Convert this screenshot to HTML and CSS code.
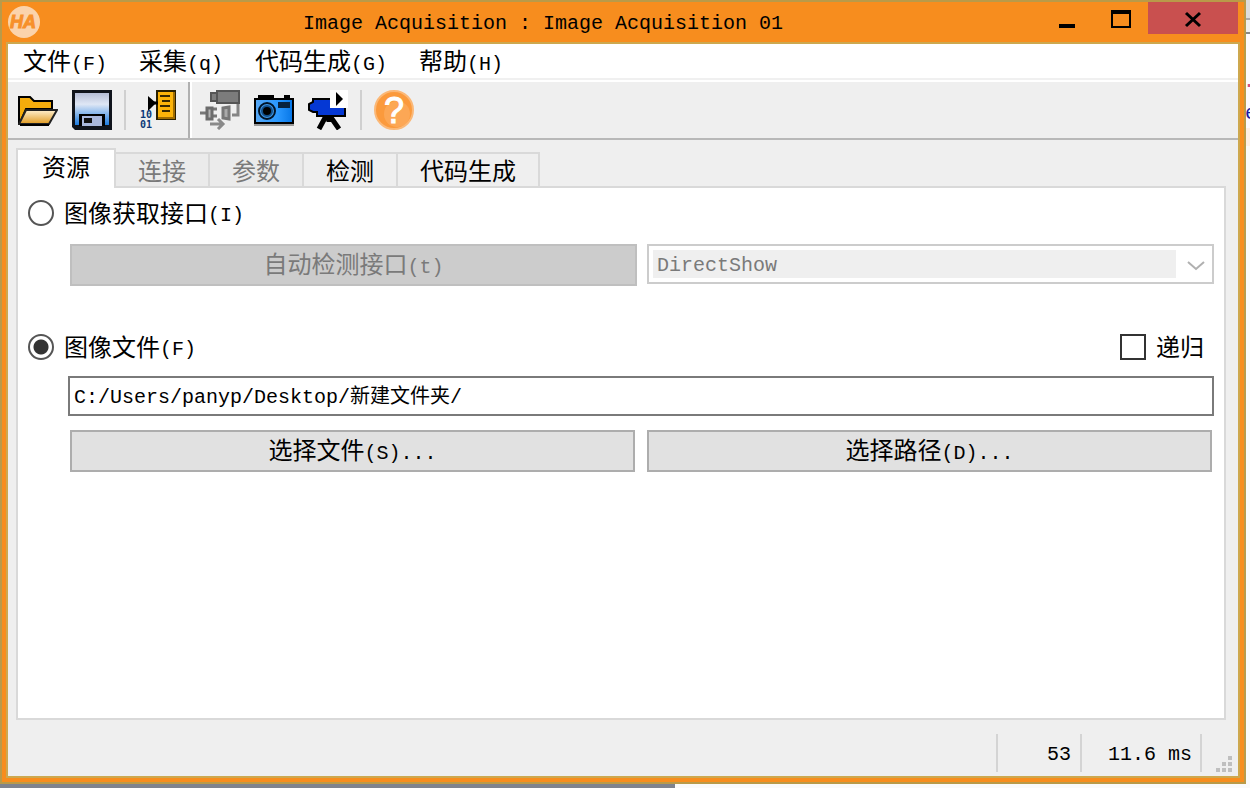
FILE: index.html
```html
<!DOCTYPE html>
<html lang="zh-CN">
  <head>
    <meta charset="UTF-8" />
    <meta name="viewport" content="width=device-width, initial-scale=1.0" />
    <title>Image Acquisition</title>
    <link rel="stylesheet" href="styles.css">
  </head>
  <body>
    <div class="behind"><span class="dot">.</span><span class="letter">e</span></div>
    <div class="window">
      <header class="titlebar">
        <svg class="logo" viewBox="0 0 32 32">
          <circle cx="16" cy="16" r="16" fill="#fbd3ab" />
          <text x="15" y="22" text-anchor="middle" font-family="Liberation Sans" font-size="18" font-weight="bold" font-style="italic" fill="#f7902a" stroke="#f7902a">HA</text>
        </svg>
        <h1 class="title">Image Acquisition : Image Acquisition 01</h1>
        <div class="win-btns">
          <button class="win-btn" aria-label="Minimize">
            <svg viewBox="0 0 20 20"><path d="M2 14h16v4H2z" /></svg>
          </button>
          <button class="win-btn" aria-label="Maximize">
            <svg viewBox="0 0 20 20"><path d="M0 0h20v18H0zM2 4v12h16V4z" fill-rule="evenodd" /></svg>
          </button>
          <button class="win-btn close" aria-label="Close">
            <svg viewBox="0 0 20 20"><path d="M3 3l14 13M17 3L3 16" stroke="#000" stroke-width="3" /></svg>
          </button>
        </div>
      </header>

      <div class="client">
        <nav class="menu">
          <button>文件<span class="en">(F)</span></button>
          <button>采集<span class="en">(q)</span></button>
          <button>代码生成<span class="en">(G)</span></button>
          <button>帮助<span class="en">(H)</span></button>
        </nav>

        <div class="toolbar">
          <div class="tools">
            <button class="tool" aria-label="Open">
              <svg viewBox="0 0 40 40">
                <defs>
                  <linearGradient id="paper" x1="0" y1="0" x2="0" y2="1">
                    <stop offset="0" stop-color="#fff0d0" />
                    <stop offset="1" stop-color="#e09a20" />
                  </linearGradient>
                </defs>
                <path d="M1 33V7h11l4 4h18v8H8L2 33z" fill="#f5ac0c" stroke="#000" stroke-width="2" />
                <path d="M8 20h31l-8 14H1z" fill="url(#paper)" stroke="#222" stroke-width="2" />
                <path d="M2 35h29" stroke="#000" stroke-width="2" />
              </svg>
            </button>
            <button class="tool" aria-label="Save">
              <svg viewBox="0 0 40 40">
                <defs>
                  <linearGradient id="disk" x1="0" y1="0" x2="0" y2="1">
                    <stop offset="0" stop-color="#b5bdd6" />
                    <stop offset="0.35" stop-color="#dfe7f5" />
                    <stop offset="1" stop-color="#1d7ce0" />
                  </linearGradient>
                </defs>
                <path d="M0 0h40v40H3l-3-3z" fill="#10141c" />
                <path d="M3 3h34v32H3z" fill="url(#disk)" />
                <path d="M7 24h26v12H7z" fill="#000" />
                <path d="M10 26h20v10H10z" fill="#a9b8dc" />
                <path d="M12 28h8v5h-8z" fill="#111" />
              </svg>
            </button>
            <span class="sep"></span>
            <button class="tool" aria-label="Insert code">
              <svg viewBox="0 0 40 40">
                <path d="M19 1h18v28H19z" fill="#fdb409" stroke="#2b2000" stroke-width="2" />
                <path d="M36 2v26H20" fill="none" stroke="#a06c00" stroke-width="2" />
                <path d="M22 6h10M24 11h8M22 16h10M24 21h8" stroke="#3a2a00" stroke-width="2" />
                <path d="M10 6l8 7-8 8z" fill="#000" />
                <path d="M14 13h6" stroke="#000" stroke-width="3" />
                <text x="2" y="28" font-family="DejaVu Sans Mono" font-size="10" font-weight="bold" fill="#0b3a78">10</text>
                <text x="2" y="38" font-family="DejaVu Sans Mono" font-size="10" font-weight="bold" fill="#0b3a78">01</text>
              </svg>
            </button>
          </div>
          <div class="tools second">
            <button class="tool" aria-label="Connect" disabled>
              <svg viewBox="0 0 40 40">
                <path d="M17 1h22v12H17zM11 3h6v8h-6z" fill="#7c7c7c" stroke="#555" stroke-width="2" />
                <path d="M38 14v11h-6" fill="none" stroke="#858585" stroke-width="3" />
                <path d="M0 23h6M12 19h5M12 26h5" stroke="#777" stroke-width="3" />
                <path d="M7 18h5v11H7z" fill="#b4b4b4" stroke="#6b6b6b" stroke-width="3" />
                <path d="M23 18l6-1v12l-6-1z" fill="#aaa" stroke="#777" stroke-width="3" />
                <path d="M10 34h12M18 29l5 5-5 5" fill="none" stroke="#8a8a8a" stroke-width="3" />
              </svg>
            </button>
            <button class="tool" aria-label="Snap">
              <svg viewBox="0 0 40 40">
                <defs>
                  <linearGradient id="cam" x1="0" y1="0" x2="1" y2="0">
                    <stop offset="0" stop-color="#56a8f5" />
                    <stop offset="0.6" stop-color="#2a98ff" />
                    <stop offset="1" stop-color="#0878e8" />
                  </linearGradient>
                </defs>
                <path d="M0 33h40v3H0z" fill="#999" />
                <path d="M4 8V5h16v3h10V5h6v3h4v26H0V8z" fill="#000" />
                <path d="M2 10h36v22H2z" fill="url(#cam)" />
                <circle cx="13" cy="21" r="8" fill="#3f97e6" stroke="#001428" stroke-width="2" />
                <circle cx="13" cy="21" r="5" fill="#000" stroke="#12508c" stroke-width="2" />
                <path d="M24 12h12v6H24z" fill="#07223f" />
              </svg>
            </button>
            <button class="tool" aria-label="Live">
              <svg viewBox="0 0 40 40">
                <path d="M18 26L11 39M22 26l9 13M21 26v6" stroke="#000" stroke-width="5" />
                <path d="M5 9h32v17H9v-4H5l-4-2v-6l4-2z" fill="#0538d4" stroke="#000" stroke-width="2" />
                <path d="M22 0h18v18H22z" fill="#fff" />
                <path d="M28 2l7 7-7 7z" fill="#000" />
              </svg>
            </button>
            <span class="sep"></span>
            <button class="tool" aria-label="Help">
              <svg viewBox="0 0 40 40">
                <circle cx="20" cy="20" r="19" fill="#fb9a3c" stroke="#fbb877" stroke-width="2" />
                <circle cx="23" cy="24" r="13" fill="#fdb065" opacity="0.6" />
                <text x="20" y="33" text-anchor="middle" font-family="Liberation Sans" font-size="36" fill="#fff" stroke="#fff">?</text>
              </svg>
            </button>
          </div>
        </div>

        <main class="main">
          <div class="tabs" role="tablist">
            <button class="tab active" role="tab">资源</button>
            <button class="tab" role="tab" disabled>连接</button>
            <button class="tab" role="tab" disabled>参数</button>
            <button class="tab" role="tab">检测</button>
            <button class="tab" role="tab">代码生成</button>
          </div>
          <section class="pane">
            <div class="line">
              <label class="option"><input type="radio" name="source">图像获取接口<span class="en">(I)</span></label>
            </div>
            <div class="row detect">
              <button class="btn" disabled>自动检测接口<span class="en">(t)</span></button>
              <div class="combo">
                <select aria-label="接口" disabled>
                  <option>DirectShow</option>
                </select>
                <svg class="arrow" viewBox="0 0 18 10"><path d="M1 1l8 7 8-7" fill="none" stroke="#b0b0b0" stroke-width="2" /></svg>
              </div>
            </div>
            <div class="line">
              <label class="option"><input type="radio" name="source" checked>图像文件<span class="en">(F)</span></label>
              <label class="option"><input type="checkbox">递归</label>
            </div>
            <div class="files">
              <input class="path" type="text" aria-label="图像文件" value="C:/Users/panyp/Desktop/新建文件夹/">
              <div class="row choose">
                <button class="btn">选择文件<span class="en">(S)...</span></button>
                <button class="btn">选择路径<span class="en">(D)...</span></button>
              </div>
            </div>
          </section>
        </main>

        <footer class="status">
          <span class="cell count">53</span>
          <span class="cell time">11.6 ms</span>
          <span class="cell grip">
            <svg viewBox="0 0 16 16"><path d="M12 0h4v4h-4zM6 6h4v4H6zM12 6h4v4h-4zM0 12h4v4H0zM6 12h4v4H6zM12 12h4v4h-4z" fill="#bfbfbf" /></svg>
          </span>
        </footer>
      </div>
    </div>
  </body>
</html>
```
FILE: styles.css
```css
* {
  box-sizing: border-box;
}
body {
  margin: 0;
  min-height: 100vh;
  padding: 0 4px 4px 0;
  display: flex;
  position: relative;
  overflow: hidden;
  background: linear-gradient(to right, #7f838e 54%, #fafafa 54%);
  font-family: "Liberation Mono", "Noto Sans CJK SC", monospace;
  font-size: 24px;
  line-height: 32px;
  color: #000;
}
button,
input,
select {
  font: inherit;
  color: inherit;
  margin: 0;
}
button {
  border: 0;
  padding: 0;
  background: none;
  white-space: nowrap;
}
svg {
  display: block;
}
.en {
  font-size: 20px;
}

/* sliver of the window underneath */
.behind {
  position: absolute;
  top: 0;
  right: 0;
  bottom: 4px;
  width: 4px;
  overflow: hidden;
  font-size: 20px;
  background: linear-gradient(#dedede 18px, #aaa 18px, #aaa 20px, #f0f0f0 20px, #f0f0f0 32px, #888 32px, #888 34px, #fdfaff 34px, #fdfaff 128px, #fff0e6 128px, #fff0e6 146px, #fafafa 146px);
}
.behind .dot {
  position: absolute;
  top: 66px;
  left: -3px;
  color: #d0507a;
}
.behind .letter {
  position: absolute;
  top: 98px;
  left: -1px;
  color: #1a1aa0;
}

.window {
  flex: 1;
  display: flex;
  flex-direction: column;
  position: relative;
  border: 2px solid #b99a49;
  padding: 0 4px 4px;
  background: #f78d1e;
}
.titlebar {
  display: grid;
  grid-template-columns: 100px 1fr 260px;
  height: 40px;
}
.logo {
  width: 32px;
  height: 32px;
  margin: 4px 0 0 2px;
}
.title {
  margin: 0;
  padding-top: 6px;
  text-align: center;
  font-size: 20px;
  font-weight: normal;
}
.win-btns {
  display: flex;
  justify-content: flex-end;
  padding-right: 2px;
}
.win-btn {
  width: 54px;
  height: 32px;
  display: flex;
  align-items: center;
  justify-content: center;
}
.win-btn svg {
  width: 20px;
  height: 20px;
  margin-top: 4px;
}
.win-btn.close {
  width: 90px;
  background: #c9504f;
}

.client {
  flex: 1;
  display: flex;
  flex-direction: column;
  border: 2px solid #cda84f;
  background: #efefef;
}
.menu {
  display: flex;
  gap: 32px;
  height: 36px;
  padding: 0 15px;
  background: #fff;
  border-bottom: 2px solid #f0f0f0;
}
.menu button {
  padding-top: 4px;
}
.toolbar {
  display: flex;
  border-bottom: 2px solid #b8b8b8;
  border-top: 2px solid #fff;
}
.tools {
  display: flex;
  gap: 14px;
  padding: 8px 10px;
  border-right: 2px solid #b0b0b0;
}
.tools.second {
  border-left: 2px solid #fff;
  border-right: 0;
  padding-left: 8px;
}
.tool,
.tool svg {
  width: 40px;
  height: 40px;
}
.sep {
  width: 2px;
  height: 40px;
  margin: 0 -2px;
  background: #d0d0d0;
}

.main {
  flex: 1;
  display: flex;
  flex-direction: column;
  padding: 8px 12px 0 8px;
}
.tabs {
  display: flex;
  align-items: flex-end;
  height: 38px;
}
.tab {
  height: 36px;
  margin-left: -2px;
  margin-bottom: -2px;
  padding: 4px 22px 0;
  border: 2px solid #d9d9d9;
  background: #efefef;
}
.tab:disabled {
  background: #ebebeb;
  color: #7a7a7a;
}
.tab.active {
  height: 40px;
  margin-left: 0;
  padding: 2px 24px 0;
  position: relative;
  border-bottom: 0;
  background: #fff;
}
.pane {
  flex: 1;
  border: 2px solid #d9d9d9;
  padding: 9px 10px 0;
  background: #fff;
}
.line {
  display: flex;
  justify-content: space-between;
  padding-right: 10px;
}
.option {
  display: flex;
  align-items: flex-start;
  height: 38px;
  line-height: 38px;
}
.option input {
  appearance: none;
  width: 26px;
  height: 26px;
  margin-top: 3px;
  margin-right: 10px;
  border: 2px solid #333;
  background: #fff;
}
.option input[type="radio"] {
  border-radius: 50%;
  border-color: #555;
}
.option input[type="radio"]:checked {
  background: radial-gradient(circle, #333 7px, #fff 8px);
}
.row {
  display: grid;
  grid-template-columns: 1fr 1fr;
}
.detect {
  gap: 10px;
  margin: 9px 0 45px;
  padding-left: 42px;
}
.btn {
  height: 42px;
  padding-top: 4px;
  border: 2px solid #adadad;
  background: #e1e1e1;
}
.btn:disabled {
  border-color: #bfbfbf;
  background: #ccc;
  color: #7a7a7a;
}
.combo {
  position: relative;
}
.combo select {
  appearance: none;
  display: block;
  width: 100%;
  height: 40px;
  padding: 4px 36px 4px 4px;
  border: 2px solid #ccc;
  border-radius: 0;
  background: #efefef content-box;
  font-size: 20px;
  text-indent: 4px;
  color: #7a7a7a;
  opacity: 1;
}
.combo .arrow {
  position: absolute;
  top: 17px;
  right: 9px;
  width: 18px;
  height: 10px;
}
.files {
  padding-left: 40px;
  margin-top: 7px;
}
.path {
  display: block;
  width: 100%;
  height: 40px;
  padding: 0 4px 4px;
  border: 2px solid #7a7a7a;
  font-size: 20px;
}
.choose {
  gap: 12px;
  margin-top: 14px;
  padding: 0 2px;
}

.status {
  display: flex;
  justify-content: flex-end;
  height: 56px;
  padding: 14px 4px 4px 0;
  font-size: 20px;
}
.cell {
  border-left: 2px solid #d4d4d4;
  line-height: 42px;
}
.count {
  width: 84px;
  padding-right: 9px;
  text-align: right;
}
.time {
  width: 120px;
  padding-right: 8px;
  text-align: right;
}
.grip {
  display: flex;
  align-items: flex-end;
  justify-content: flex-end;
  width: 34px;
  padding-right: 2px;
}
.grip svg {
  width: 16px;
  height: 16px;
}
```
